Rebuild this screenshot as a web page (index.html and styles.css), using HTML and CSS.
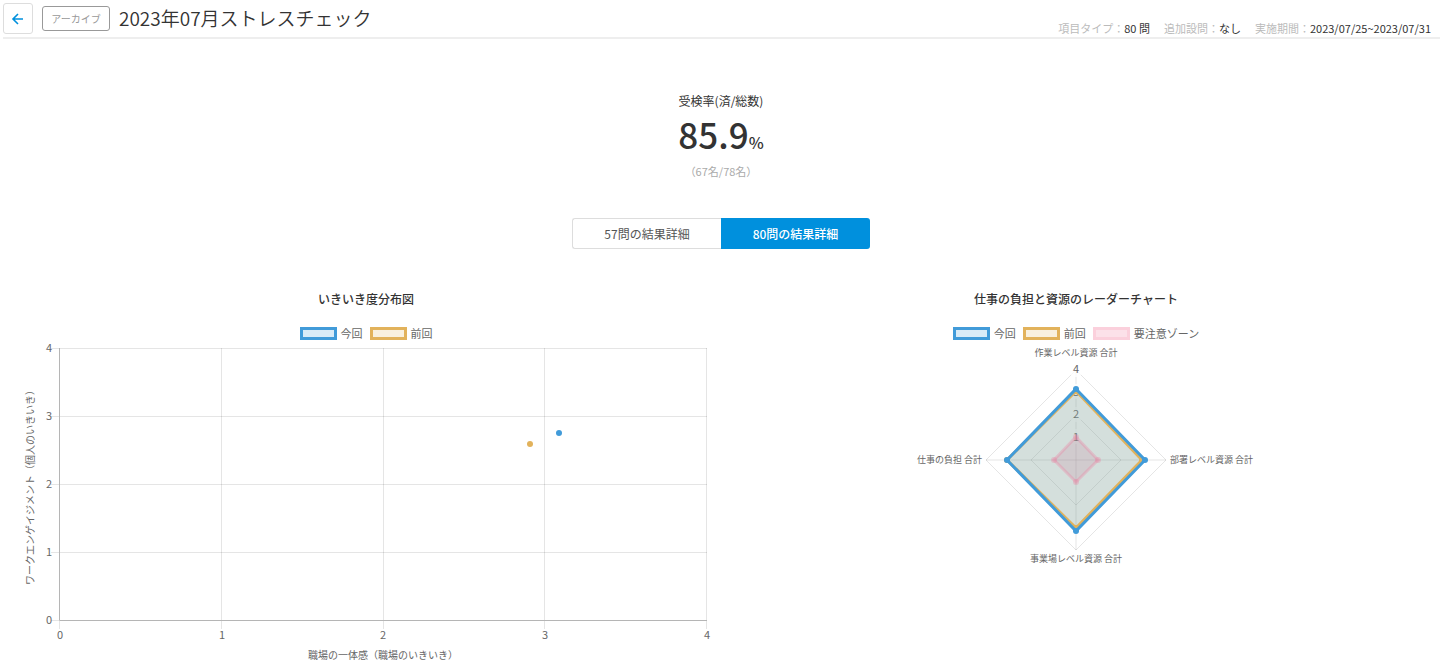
FILE: index.html
```html
<!DOCTYPE html>
<html lang="ja">

<head>
  <meta charset="UTF-8">
  <meta name="viewport" content="width=device-width, initial-scale=1.0">
  <title>2023年07月ストレスチェック</title>
  <link rel="stylesheet" href="styles.css">
</head>

<body>
  <header class="page-header">
    <button type="button" class="back-button" aria-label="戻る">
      <svg width="14" height="14" viewBox="0 0 14 14">
        <path d="M12 7H3M7 2L2 7L7 12" />
      </svg>
    </button>
    <span class="archive-tag">アーカイブ</span>
    <h1>2023年07月ストレスチェック</h1>
    <dl class="info">
      <div>
        <dt>項目タイプ：</dt>
        <dd>80 問</dd>
      </div>
      <div>
        <dt>追加設問：</dt>
        <dd>なし</dd>
      </div>
      <div>
        <dt>実施期間：</dt>
        <dd>2023/07/25~2023/07/31</dd>
      </div>
    </dl>
  </header>

  <main>
    <section class="rate">
      <p class="rate-label">受検率(済/総数)</p>
      <p class="rate-value">85.9<span>%</span></p>
      <p class="rate-count">（67名/78名）</p>
    </section>

    <div class="tabs">
      <button type="button" class="tab">57問の結果詳細</button>
      <button type="button" class="tab active">80問の結果詳細</button>
    </div>

    <div class="charts">
      <section class="chart">
        <h2>いきいき度分布図</h2>
        <ul class="legend">
          <li><span class="swatch current"></span>今回</li>
          <li><span class="swatch previous"></span>前回</li>
        </ul>
        <svg viewBox="0 0 710 325">
          <!-- grid -->
          <g class="grid">
            <path d="M40 7.5H696M40 75.5H696M40 143.5H696M40 211.5H696" />
            <path d="M210.5 7V288M372.5 7V288M533.5 7V288M695.5 7V288" />
            <path d="M40 279.5H48M48.5 280V288" />
          </g>
          <path class="axis" d="M48.5 7V279.5H696" />
          <!-- scale -->
          <g class="tick end">
            <text x="41" y="11">4</text>
            <text x="41" y="79">3</text>
            <text x="41" y="147">2</text>
            <text x="41" y="215">1</text>
            <text x="41" y="283">0</text>
          </g>
          <g class="tick">
            <text x="49" y="298">0</text>
            <text x="211" y="298">1</text>
            <text x="372" y="298">2</text>
            <text x="534" y="298">3</text>
            <text x="696" y="298">4</text>
          </g>
          <text class="axis-title" x="372" y="318">職場の一体感（職場のいきいき）</text>
          <text class="axis-title" transform="translate(23 144) rotate(-90)">ワークエンゲイジメント（個人のいきいき）</text>
          <!-- results -->
          <circle class="dot-previous" cx="519" cy="103" r="3" />
          <circle class="dot-current" cx="548" cy="92" r="3" />
        </svg>
      </section>

      <section class="chart">
        <h2>仕事の負担と資源のレーダーチャート</h2>
        <ul class="legend">
          <li><span class="swatch current"></span>今回</li>
          <li><span class="swatch previous"></span>前回</li>
          <li><span class="swatch caution"></span>要注意ゾーン</li>
        </ul>
        <svg viewBox="0 0 710 325">
          <g class="grid">
            <path d="M355 29L445 119L355 209L265 119Z" />
            <path d="M355 74L400 119L355 164L310 119Z" />
            <path d="M355 29V209M265 119H445" />
          </g>
          <g class="backdrop">
            <rect x="350" y="21" width="10" height="15" />
            <rect x="350" y="43" width="10" height="15" />
            <rect x="350" y="66" width="10" height="15" />
            <rect x="350" y="88" width="10" height="15" />
          </g>
          <g class="tick">
            <text x="355" y="32">4</text>
            <text x="355" y="55">3</text>
            <text x="355" y="77">2</text>
            <text x="355" y="100">1</text>
          </g>
          <!-- areas -->
          <path class="fill-caution" d="M355 96L377 119L355 141L333 119Z" />
          <path class="fill-previous" d="M355 50L421 119L355 187L286 119Z" />
          <path class="fill-current" d="M355 48L424 119L355 190L286 119Z" />
          <!-- outlines -->
          <g class="line-caution">
            <path d="M355 96L377 119L355 141L333 119Z" />
            <circle cx="355" cy="96" r="3" />
            <circle cx="377" cy="119" r="3" />
            <circle cx="355" cy="141" r="3" />
            <circle cx="333" cy="119" r="3" />
          </g>
          <g class="line-previous">
            <path d="M355 50L421 119L355 187L286 119Z" />
            <circle cx="355" cy="50" r="3" />
            <circle cx="421" cy="119" r="3" />
            <circle cx="355" cy="187" r="3" />
            <circle cx="286" cy="119" r="3" />
          </g>
          <g class="line-current">
            <path d="M355 48L424 119L355 190L286 119Z" />
            <circle cx="355" cy="48" r="3" />
            <circle cx="424" cy="119" r="3" />
            <circle cx="355" cy="190" r="3" />
            <circle cx="286" cy="119" r="3" />
          </g>
          <g class="radar-label">
            <text x="355" y="15">作業レベル資源 合計</text>
            <text class="start" x="449" y="122">部署レベル資源 合計</text>
            <text x="355" y="221">事業場レベル資源 合計</text>
            <text class="end" x="261" y="122">仕事の負担 合計</text>
          </g>
        </svg>
      </section>
    </div>
  </main>
</body>

</html>
```
FILE: styles.css
```css
* {
  box-sizing: border-box;
}

body {
  margin: 0;
  padding: 0 0 0 3px;
  font-family: "Noto Sans CJK JP", sans-serif;
  font-size: 12px;
  color: #333;
  background-color: #fff;
}

h1,
h2,
p,
dl,
dd,
ul {
  margin: 0;
  padding: 0;
}

button {
  font-family: inherit;
  font-size: 12px;
  cursor: pointer;
}

/* Header */
.page-header {
  display: flex;
  align-items: center;
  height: 39px;
  padding-right: 9px;
  border-bottom: 2px solid #eee;
}

.back-button {
  display: flex;
  align-items: center;
  justify-content: center;
  width: 30px;
  height: 31px;
  padding: 0;
  border: 1px solid #ddd;
  border-radius: 3px;
  background-color: #fff;
}

.back-button svg {
  fill: none;
  stroke: #0090dd;
  stroke-width: 1.6;
}

.archive-tag {
  width: 68px;
  margin: 0 9px;
  border: 1px solid #999;
  border-radius: 3px;
  color: #999;
  font-size: 10px;
  line-height: 23px;
  text-align: center;
}

.page-header h1 {
  padding-bottom: 2px;
  font-size: 19px;
  font-weight: 350;
  line-height: 30px;
}

.info {
  display: flex;
  gap: 14px;
  align-self: flex-end;
  margin-left: auto;
  font-size: 11px;
  line-height: 18px;
}

.info div {
  display: flex;
}

.info dt {
  color: #bbb;
}

/* Rate */
main {
  padding-right: 1px;
}

.rate {
  padding-top: 52px;
  text-align: center;
}

.rate-label {
  line-height: 20px;
}

.rate-value {
  font-size: 35px;
  font-weight: 500;
  line-height: 46px;
}

.rate-value span {
  font-size: 16px;
  line-height: 16px;
}

.rate-count {
  color: #aaa;
  font-size: 11px;
  line-height: 28px;
}

/* Tabs */
.tabs {
  display: flex;
  justify-content: center;
  margin-top: 33px;
}

.tab {
  width: 149px;
  height: 31px;
  padding: 0;
  border: 1px solid #ddd;
  border-right: none;
  border-radius: 3px 0 0 3px;
  color: #555;
  background-color: #fff;
}

.tab.active {
  border: none;
  border-radius: 0 3px 3px 0;
  color: #fff;
  font-weight: 500;
  background-color: #0090dd;
}

/* Charts */
.charts {
  display: grid;
  grid-template-columns: 1fr 1fr;
  padding: 40px 8px 0;
}

.chart h2 {
  font-size: 12px;
  font-weight: 500;
  line-height: 20px;
  text-align: center;
}

.chart svg {
  display: block;
  width: 100%;
  overflow: visible;
}

.legend {
  display: flex;
  justify-content: center;
  gap: 7px;
  margin-top: 16px;
  color: #666;
  font-size: 11px;
  line-height: 16px;
  list-style: none;
}

.legend li {
  display: flex;
  align-items: center;
  gap: 4px;
}

.swatch {
  width: 37px;
  height: 13px;
  border: 3px solid;
}

.swatch.current {
  border-color: #419bd9;
  background-color: #d9ebf7;
}

.swatch.previous {
  border-color: #e2b25b;
  background-color: #f9f0de;
}

.swatch.caution {
  border-color: #fbd0dc;
  background-color: #fce1e9;
}

.grid,
.axis {
  fill: none;
  stroke: rgba(0, 0, 0, 0.1);
}

.axis {
  stroke: #b5b5b5;
}

.backdrop {
  fill: rgba(255, 255, 255, 0.75);
}

.tick {
  fill: #666;
  font-size: 11px;
  text-anchor: middle;
}

.axis-title {
  fill: #666;
  font-size: 10px;
  text-anchor: middle;
}

.radar-label {
  fill: #666;
  font-size: 9px;
  text-anchor: middle;
}

.end {
  text-anchor: end;
}

.start {
  text-anchor: start;
}

.dot-current,
.line-current circle {
  fill: #419bd9;
}

.dot-previous,
.line-previous circle {
  fill: #e2b25b;
}

.line-caution circle {
  fill: rgba(240, 120, 155, 0.3);
}

.fill-current {
  fill: rgba(65, 155, 217, 0.2);
}

.fill-previous {
  fill: rgba(226, 178, 91, 0.2);
}

.fill-caution {
  fill: rgba(240, 99, 144, 0.2);
}

.line-current path,
.line-previous path,
.line-caution path {
  fill: none;
  stroke-width: 3;
}

.line-current path {
  stroke: #419bd9;
}

.line-previous path {
  stroke: #e2b25b;
}

.line-caution path {
  stroke: rgba(240, 120, 155, 0.3);
}
```
